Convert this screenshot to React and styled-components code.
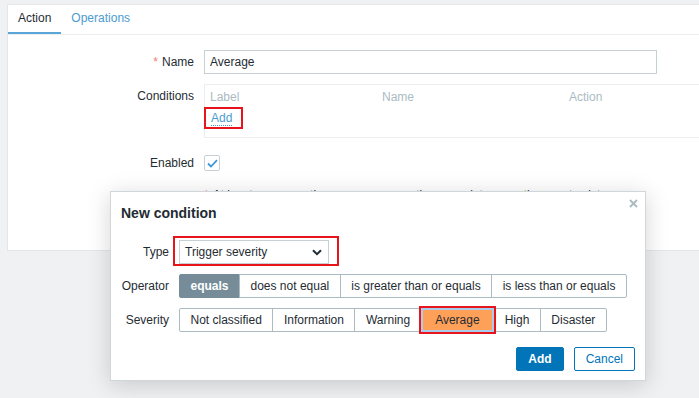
import React from "react";
import styled, { createGlobalStyle } from "styled-components";

const Global = createGlobalStyle`
  html, body { margin: 0; padding: 0; }
  body {
    background: #f0f1f3;
    font-family: "Liberation Sans", Arial, sans-serif;
    font-size: 12px;
    color: #1f2c33;
    overflow: hidden;
  }
  * { box-sizing: border-box; }
`;

const Page = styled.div`
  position: relative;
  width: 699px;
  height: 398px;
  padding: 4px 0 0 7px;
  overflow: hidden;
`;

const Card = styled.div`
  width: 720px;
  height: 247px;
  background: #fff;
  border: 1px solid #e3e7ea;
`;

const TabBar = styled.div`
  display: flex;
  height: 30px;
  border-bottom: 1px solid #ebeef0;
`;

const Tab = styled.div`
  height: 29px;
  line-height: 27px;
  padding: 0 10px;
  color: ${(p) => (p.$active ? "#1f2c33" : "#4c9bd1")};
  border-bottom: 2px solid ${(p) => (p.$active ? "#59a5d8" : "transparent")};
`;

const Form = styled.div`
  display: grid;
  grid-template-columns: 186px 1fr;
  column-gap: 10px;
  padding-top: 15px;
`;

const Label = styled.div`
  text-align: right;
  line-height: 24px;
  margin-top: ${(p) => p.$mt || 0}px;
`;

const Field = styled.div`
  margin-top: ${(p) => p.$mt || 0}px;
  min-height: 24px;
  display: flex;
  align-items: ${(p) => (p.$start ? "flex-start" : "center")};
`;

const Asterisk = styled.span`
  color: #e8836f;
  margin-right: 4px;
`;

const TextInput = styled.div`
  width: 453px;
  height: 24px;
  border: 1px solid #c6d0d5;
  line-height: 22px;
  padding: 0 5px;
`;

const Table = styled.div`
  width: 520px;
  border: 1px solid #ebeef0;
`;

const TableHead = styled.div`
  display: grid;
  grid-template-columns: 172px 187px 1fr;
  height: 24px;
  line-height: 24px;
  padding-left: 5px;
  color: #acbbc2;
`;

const TableBody = styled.div`
  padding: 2px 6px 12px 6px;
  line-height: 14px;
`;

const Highlight = styled.span`
  display: inline-block;
  border: 2px solid #e8141c;
  padding: ${(p) => p.$pad};
  margin: ${(p) => p.$margin};
`;

const LinkText = styled.span`
  color: #4c9bd1;
  border-bottom: 1px dotted #4c9bd1;
`;

const CheckBox = styled.div`
  width: 16px;
  height: 16px;
  border: 1px solid #c6d0d5;
  border-radius: 2px;
  display: flex;
  align-items: center;
  justify-content: center;
`;

const Note = styled.div`
  line-height: 24px;
`;

const Modal = styled.div`
  position: absolute;
  left: 110px;
  top: 191px;
  width: 536px;
  height: 190px;
  background: #fff;
  border: 1px solid #d0d7db;
  box-shadow: 0 4px 22px rgba(0, 0, 0, 0.17);
`;

const ModalHeader = styled.div`
  padding: 12px 10px 0 10px;
`;

const Title = styled.div`
  font-size: 14px;
  font-weight: bold;
  line-height: 18px;
  color: #1f2c33;
`;

const CloseButton = styled.div`
  position: absolute;
  top: 7px;
  right: 7px;
  width: 9px;
  height: 9px;
  display: flex;
`;

const ModalForm = styled.div`
  display: grid;
  grid-template-columns: 48px auto;
  column-gap: 10px;
  row-gap: 10px;
  padding: 18px 0 0 10px;
  justify-content: start;
`;

const ModalLabel = styled.div`
  text-align: right;
  line-height: 24px;
`;

const ModalField = styled.div`
  display: flex;
  justify-self: start;
`;

const SelectBox = styled.div`
  width: 150px;
  height: 24px;
  border: 1px solid #c6d0d5;
  display: flex;
  align-items: center;
  justify-content: space-between;
  padding: 0 6px 0 5px;
  line-height: 22px;
`;

const SegmentGroup = styled.div`
  display: inline-flex;
`;

const Segment = styled.div`
  position: relative;
  height: 24px;
  line-height: ${(p) => (p.$focus ? 20 : 22)}px;
  padding: 0 ${(p) => (p.$focus ? 12.5 : 10.5)}px;
  margin-left: -1px;
  white-space: nowrap;
  border: ${(p) => (p.$focus ? "2px solid #a7cdea" : `1px solid ${p.$selected ? "#768d99" : "#acbbc2"}`)};
  background: ${(p) => (p.$selected ? "#768d99" : p.$focus ? "#ffa059" : "#fff")};
  color: ${(p) => (p.$selected ? "#fff" : "#1f2c33")};
  font-weight: ${(p) => (p.$selected ? "bold" : "normal")};
  z-index: ${(p) => (p.$focus ? 1 : 0)};
  outline: ${(p) => (p.$focus ? "2px solid #e8141c" : "none")};
  &:first-child {
    margin-left: 0;
    border-radius: 2px 0 0 2px;
  }
  &:last-child {
    border-radius: 0 2px 2px 0;
  }
`;

const Footer = styled.div`
  display: flex;
  justify-content: flex-end;
  gap: 10px;
  padding: 15px 10px 0 0;
`;

const Button = styled.div`
  height: 24px;
  line-height: 22px;
  padding: 0 11px;
  border-radius: 2px;
  border: 1px solid #0275b8;
  background: ${(p) => (p.$primary ? "#0275b8" : "#fff")};
  color: ${(p) => (p.$primary ? "#fff" : "#0275b8")};
  font-weight: ${(p) => (p.$primary ? "bold" : "normal")};
`;

const operators = [
  "equals",
  "does not equal",
  "is greater than or equals",
  "is less than or equals",
];

const severities = [
  "Not classified",
  "Information",
  "Warning",
  "Average",
  "High",
  "Disaster",
];

export default function App() {
  return (
    <>
      <Global />
      <Page>
        <Card>
          <TabBar>
            <Tab $active>Action</Tab>
            <Tab>Operations</Tab>
          </TabBar>
          <Form>
            <Label>
              <Asterisk>*</Asterisk>Name
            </Label>
            <Field>
              <TextInput>Average</TextInput>
            </Field>

            <Label $mt={10}>Conditions</Label>
            <Field $mt={10} $start>
              <Table>
                <TableHead>
                  <span>Label</span>
                  <span>Name</span>
                  <span>Action</span>
                </TableHead>
                <TableBody>
                  <Highlight $pad="2px 9px 2px 5px" $margin="-4px 0 -4px -7px">
                    <LinkText>Add</LinkText>
                  </Highlight>
                </TableBody>
              </Table>
            </Field>

            <Label $mt={13}>Enabled</Label>
            <Field $mt={13}>
              <CheckBox>
                <svg width="11" height="9" viewBox="0 0 11 9">
                  <path d="M1 4.5 L4 7.5 L10 1.2" fill="none" stroke="#3f97d3" strokeWidth="1.8" />
                </svg>
              </CheckBox>
            </Field>

            <div />
            <Field $mt={8}>
              <Note>
                <Asterisk>*</Asterisk>At least one operation, recovery operation or update operation must exist.
              </Note>
            </Field>
          </Form>
        </Card>

        <Modal>
          <ModalHeader>
            <Title>New condition</Title>
          </ModalHeader>
          <CloseButton>
            <svg width="9" height="9" viewBox="0 0 9 9">
              <path d="M1 1 L8 8 M8 1 L1 8" stroke="#acbbc2" strokeWidth="2" />
            </svg>
          </CloseButton>
          <ModalForm>
            <ModalLabel>Type</ModalLabel>
            <ModalField>
              <Highlight $pad="2px 8px 0 4px" $margin="-4px -10px -2px -6px">
                <SelectBox>
                  <span>Trigger severity</span>
                  <svg width="10" height="7" viewBox="0 0 10 7">
                    <path d="M1 1.2 L5 5.2 L9 1.2" fill="none" stroke="#1f2c33" strokeWidth="2" />
                  </svg>
                </SelectBox>
              </Highlight>
            </ModalField>

            <ModalLabel>Operator</ModalLabel>
            <ModalField>
              <SegmentGroup>
                {operators.map((o, i) => (
                  <Segment key={o} $selected={i === 0}>
                    {o}
                  </Segment>
                ))}
              </SegmentGroup>
            </ModalField>

            <ModalLabel>Severity</ModalLabel>
            <ModalField>
              <SegmentGroup>
                {severities.map((s) => (
                  <Segment key={s} $focus={s === "Average"}>
                    {s}
                  </Segment>
                ))}
              </SegmentGroup>
            </ModalField>
          </ModalForm>
          <Footer>
            <Button $primary>Add</Button>
            <Button>Cancel</Button>
          </Footer>
        </Modal>
      </Page>
    </>
  );
}
